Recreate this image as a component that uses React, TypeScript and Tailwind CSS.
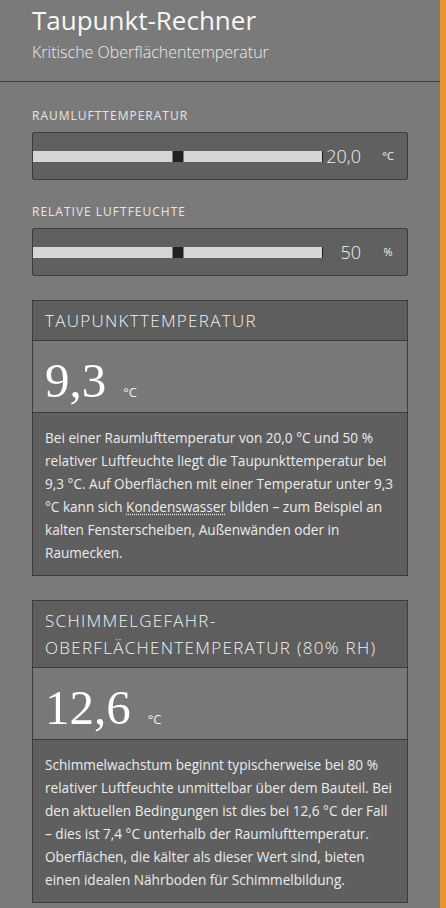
const sans = "font-['Open_Sans','Noto_Sans',sans-serif]";

type SliderProps = {
  label: string;
  value: string;
  unit: string;
  percent: number;
};

function SliderField({ label, value, unit, percent }: SliderProps) {
  return (
    <div>
      <p className="text-[12px] leading-4 tracking-[1px] text-[#e6e6e6]">{label}</p>
      <div className="mt-2 flex h-12 items-center rounded-[2px] border border-[#3c3c3c] bg-[#606060]">
        <div className="relative h-[11px] flex-1 border-r border-[#1c1c1c] bg-[#d6d6d6]">
          <div
            className="absolute top-0 h-[11px] w-[11px] -translate-x-1/2 bg-[#222]"
            style={{ left: `${percent}%` }}
          />
        </div>
        <span className="w-[46px] pr-[8px] text-right text-[18px] font-light text-[#f2f2f2]">{value}</span>
        <span className="w-[38px] text-center text-[11px] text-[#f2f2f2]">{unit}</span>
      </div>
    </div>
  );
}

type ResultProps = {
  title: React.ReactNode;
  value: string;
  children: React.ReactNode;
};

function ResultCard({ title, value, children }: ResultProps) {
  return (
    <section className="border border-[#3c3c3c]">
      <h2 className="border-b border-[#3c3c3c] bg-[#5e5e5e] px-3 py-[6px] text-[17px] font-light leading-[27px] tracking-[1.3px] text-[#f2f2f2]">
        {title}
      </h2>
      <div className="flex items-baseline gap-[17px] border-b border-[#3c3c3c] bg-[#787878] px-3 pt-[15px] pb-[7px]">
        <span className="font-['Liberation_Serif',serif] text-[49px] leading-[49px] text-white">{value}</span>
        <span className="text-[13px] text-[#f2f2f2]">°C</span>
      </div>
      <p className="bg-[#5f5f5f] pl-3 pr-2 pt-[13px] pb-[11px] text-[13.6px] leading-[23px] text-[#ececec]">
        {children}
      </p>
    </section>
  );
}

export default function App() {
  return (
    <div className={`flex min-h-screen bg-[#7a7a7a] ${sans}`}>
      <div className="flex-1 border-r-[6px] border-[#e8952e]">
        <header className="border-b border-[#3f3f3f] px-8 pt-[3px] pb-[18px]">
          <h1 className="text-[26px] leading-[34px] text-[#f7f7f7]">Taupunkt-Rechner</h1>
          <p className="mt-[4px] text-[16px] font-light leading-[22px] text-[#ececec]">
            Kritische Oberflächentemperatur
          </p>
        </header>

        <main className="flex flex-col gap-6 px-8 pt-[26px] pb-8">
          <div className="flex flex-col gap-6">
            <SliderField label="RAUMLUFTTEMPERATUR" value="20,0" unit="°C" percent={50} />
            <SliderField label="RELATIVE LUFTFEUCHTE" value="50" unit="%" percent={50} />
          </div>

          <ResultCard title="TAUPUNKTTEMPERATUR" value="9,3">
            Bei einer Raumlufttemperatur von 20,0 °C und 50 %<br />
            relativer Luftfeuchte liegt die Taupunkttemperatur bei<br />
            9,3 °C. Auf Oberflächen mit einer Temperatur unter 9,3<br />
            °C kann sich{" "}
            <abbr className="underline decoration-dotted underline-offset-2" title="Kondensat">
              Kondenswasser
            </abbr>{" "}
            bilden – zum Beispiel an<br />
            kalten Fensterscheiben, Außenwänden oder in<br />
            Raumecken.
          </ResultCard>

          <ResultCard
            title={
              <>
                SCHIMMELGEFAHR-
                <br />
                OBERFLÄCHENTEMPERATUR (80% RH)
              </>
            }
            value="12,6"
          >
            Schimmelwachstum beginnt typischerweise bei 80 %<br />
            relativer Luftfeuchte unmittelbar über dem Bauteil. Bei<br />
            den aktuellen Bedingungen ist dies bei 12,6 °C der Fall<br />
            – dies ist 7,4 °C unterhalb der Raumlufttemperatur.<br />
            Oberflächen, die kälter als dieser Wert sind, bieten<br />
            einen idealen Nährboden für Schimmelbildung.
          </ResultCard>
        </main>
      </div>
    </div>
  );
}
